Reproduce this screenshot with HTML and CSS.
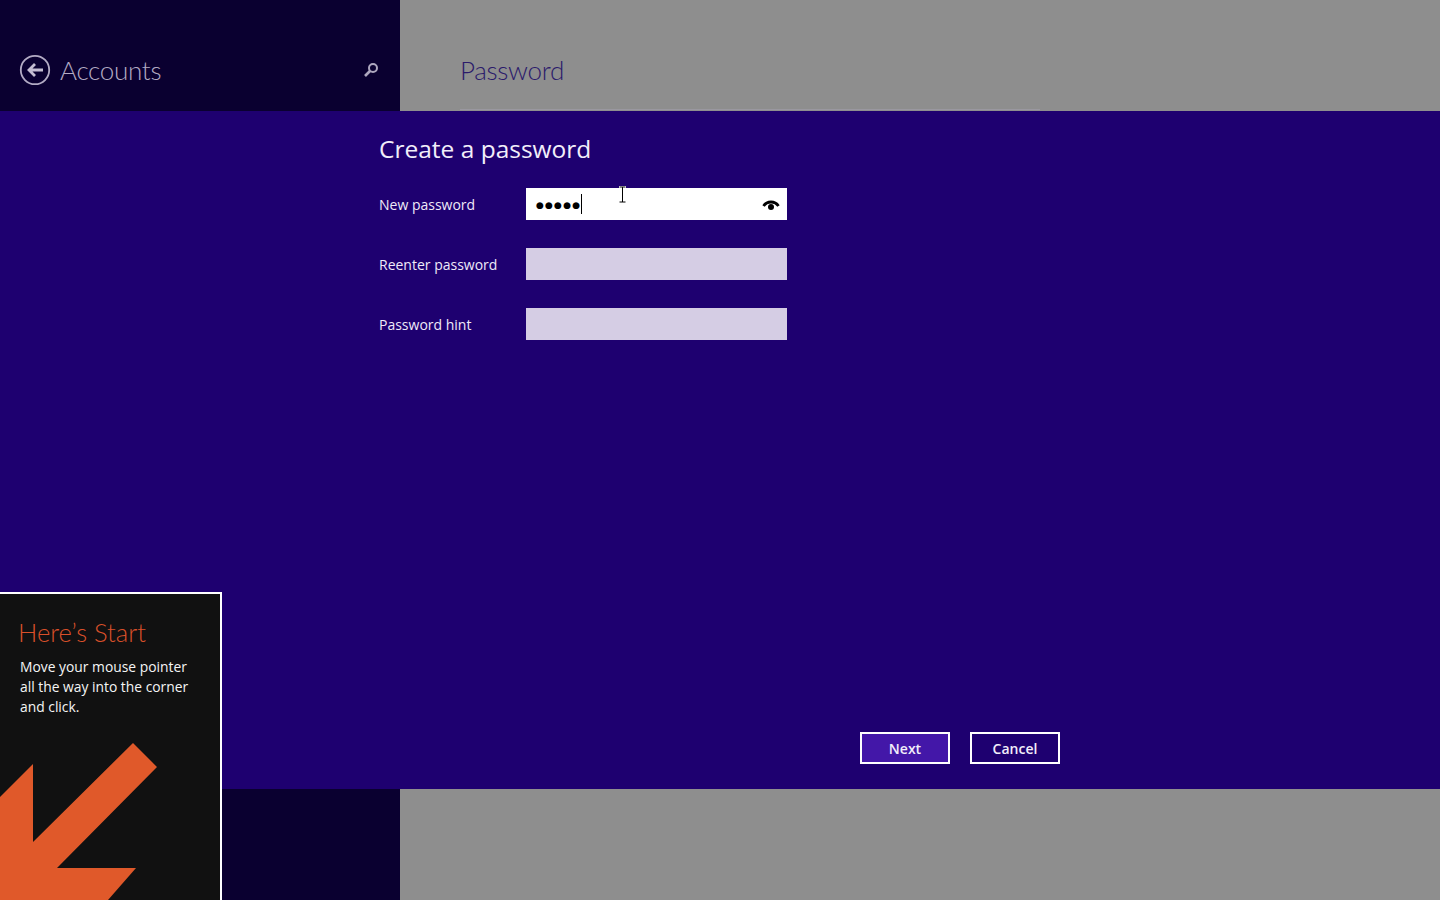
FILE: index.html
```html
<!DOCTYPE html>
<html lang="en">
<head>
<meta charset="utf-8">
<title>Create a password</title>
<link rel="stylesheet" href="styles.css">
</head>
<body>
<div class="backdrop">
  <aside class="side">
    <header class="side-head">
      <svg class="back" width="32" height="32" viewBox="0 0 32 32" aria-hidden="true">
        <circle cx="16" cy="16" r="14.200" fill="none" stroke="#b3abc4" stroke-width="1.800"/>
        <path d="M24 16H11M16 10 10 16l6 6" fill="none" stroke="#c4bdd2" stroke-width="2.800"/>
      </svg>
      <span class="side-title">Accounts</span>
      <svg class="search" width="16" height="16" viewBox="0 0 16 16" aria-hidden="true">
        <circle cx="10" cy="6" r="4" fill="none" stroke="#aea7bf" stroke-width="2"/>
        <path d="M7 9 2 14" stroke="#aea7bf" stroke-width="2.600"/>
      </svg>
    </header>
  </aside>
  <main class="content">
    <h2 class="content-title">Password</h2>
    <div class="clipped-line"></div>
  </main>
</div>

<section class="dialog">
  <div class="dialog-inner">
    <h1 class="dialog-title">Create a password</h1>
    <div class="form">
      <div class="row">
        <span class="label">New password</span>
        <div class="field field-active">
          <span class="dots">●●●●●</span><span class="caret"></span>
          <svg class="eye" width="18" height="12" viewBox="0 0 18 12" aria-hidden="true">
            <path d="M1.500 7C3.300 4.300 5.800 3 9 3s5.700 1.300 7.500 4" fill="none" stroke="#000" stroke-width="2.800"/>
            <circle cx="9" cy="8" r="3" fill="#000"/>
          </svg>
        </div>
      </div>
      <div class="row">
        <span class="label">Reenter password</span>
        <div class="field"></div>
      </div>
      <div class="row">
        <span class="label">Password hint</span>
        <div class="field"></div>
      </div>
    </div>
    <div class="actions">
      <button class="btn btn-primary">Next</button>
      <button class="btn">Cancel</button>
    </div>
  </div>
</section>

<svg class="ibeam" width="9" height="17" viewBox="0 0 9 17" aria-hidden="true">
  <path d="M1 1h7M1 16h7M4.500 1v15" fill="none" stroke="#fff" stroke-width="3"/>
  <path d="M1.500 1h6M1.500 16h6M4.500 1v15" fill="none" stroke="#000" stroke-width="1"/>
</svg>

<aside class="tip">
  <h3 class="tip-title">Here’s Start</h3>
  <p class="tip-text">Move your mouse pointer<br>all the way into the corner<br>and click.</p>
  <svg class="tip-arrow" width="160" height="160" viewBox="0 0 160 160" aria-hidden="true">
    <path d="M133 0 157 24 57 125H136L108 157H0V54L33 21V99Z" fill="#e0592a"/>
  </svg>
</aside>
</body>
</html>
```
FILE: styles.css
```css
* { box-sizing: border-box; }
html, body { margin: 0; height: 100%; overflow: hidden; }
body {
  position: relative;
  width: 1440px;
  height: 900px;
  background: #8e8e8e;
  font-family: "Open Sans", "Noto Sans", sans-serif;
}
.backdrop { display: flex; height: 900px; }
.side { width: 400px; background: #0a0030; }
.side-head {
  display: flex;
  align-items: center;
  height: 140px;
  padding: 0 20px 0 19px;
}
.back { flex: none; }
.side-title {
  flex: 1;
  margin-left: 9px;
  font-family: "Lato", sans-serif;
  font-weight: 300;
  font-size: 26px;
  letter-spacing: -0.300px;
  color: #b3abc4;
}
.search { flex: none; margin-right: 1px; }
.content { flex: 1; padding: 52px 60px; }
.content-title {
  margin: 0;
  font-family: "Lato", sans-serif;
  font-weight: 300;
  font-size: 26px;
  letter-spacing: -0.300px;
  line-height: 36px;
  color: #2b1a6b;
}
.clipped-line {
  width: 580px;
  height: 1px;
  margin-top: 21px;
  background: #9a98a0;
}
.dialog {
  position: absolute;
  top: 111px;
  left: 0;
  width: 1440px;
  height: 678px;
  background: #1e0070;
  padding: 20px 380px 0 379px;
  color: #fff;
}
.dialog-inner { position: relative; height: 100%; display: flex; flex-direction: column; }
.dialog-title {
  margin: 0;
  font-weight: 400;
  font-size: 24.500px;
  line-height: 36px;
  color: #f2eefa;
}
.form { margin-top: 21px; display: flex; flex-direction: column; gap: 28px; }
.row { display: flex; align-items: center; height: 32px; }
.label { width: 147px; font-size: 14px; color: #efeaf8; }
.field {
  position: relative;
  display: flex;
  align-items: center;
  width: 261px;
  height: 32px;
  background: #d5cde4;
  padding-left: 10px;
}
.field-active { background: #fff; }
.dots {
  position: relative;
  top: 1px;
  font-family: "DejaVu Sans", sans-serif;
  font-size: 9px;
  letter-spacing: 1.200px;
  color: #000;
}
.caret { width: 1px; height: 20px; background: #000; }
.eye { position: absolute; right: 7px; top: 11px; }
.actions {
  position: absolute;
  top: 601px;
  left: 481px;
  display: flex;
  gap: 20px;
}
.btn {
  width: 90px;
  height: 32px;
  padding: 0;
  background: #1e0070;
  border: 2px solid #fff;
  border-radius: 0;
  color: #f2eefa;
  font-family: "Open Sans", sans-serif;
  font-weight: 600;
  font-size: 14px;
}
.btn-primary { background: #4317a8; }
.ibeam { position: absolute; left: 618px; top: 186px; }
.tip {
  position: absolute;
  left: 0;
  top: 592px;
  width: 222px;
  height: 308px;
  background: #111;
  border: 2px solid #fff;
  border-width: 2px 2px 0 0;
  overflow: hidden;
}
.tip-title {
  margin: 21px 0 0 18px;
  font-family: "Lato", sans-serif;
  font-weight: 300;
  font-size: 25.600px;
  line-height: 34px;
  color: #d9502a;
}
.tip-text {
  margin: 8px 0 0 20px;
  font-size: 13.850px;
  line-height: 20px;
  color: #f5f5f5;
  white-space: nowrap;
}
.tip-arrow { position: absolute; left: 0; top: 149px; }
```
